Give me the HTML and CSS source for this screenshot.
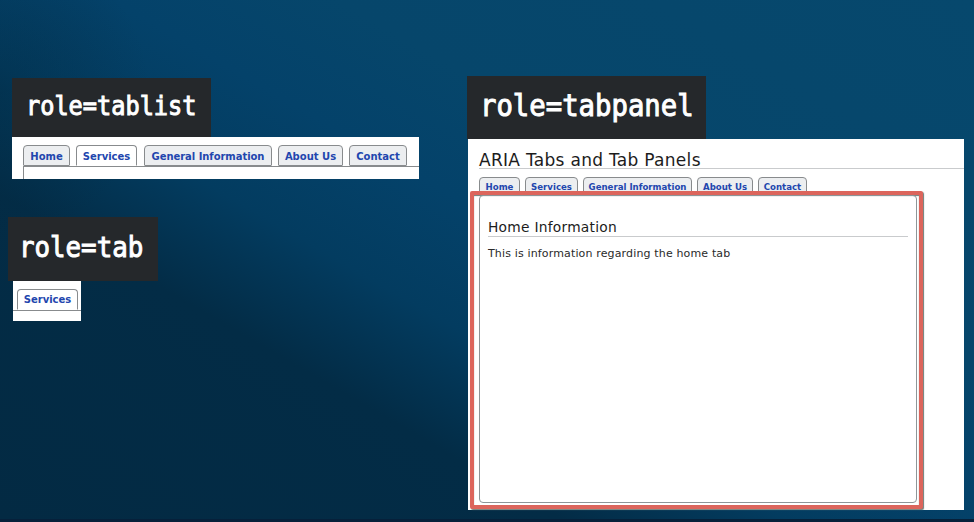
FILE: index.html
```html
<!DOCTYPE html>
<html lang="en">
<head>
<meta charset="utf-8">
<title>ARIA Tabs and Tab Panels</title>
<link rel="stylesheet" href="styles.css">
</head>
<body>
<main class="slide">
  <div class="col-left">
    <section class="example">
      <div class="label label-list"><code>role=tablist</code></div>
      <div class="strip">
        <nav class="tabs">
          <span class="tab w-home">Home</span><span class="tab w-services active">Services</span><span class="tab w-general">General Information</span><span class="tab w-about">About Us</span><span class="tab w-contact">Contact</span>
        </nav>
        <div class="edge"></div>
      </div>
    </section>
    <section class="example single">
      <div class="label label-tab"><code>role=tab</code></div>
      <div class="chip">
        <span class="tab w-services active">Services</span>
        <div class="chip-edge"></div>
      </div>
    </section>
  </div>
  <section class="col-right">
    <div class="label label-panel"><code>role=tabpanel</code></div>
    <div class="page">
      <h1><span>ARIA Tabs and Tab Panels</span></h1>
      <nav class="tabs small">
        <span class="tab w-home">Home</span><span class="tab w-services">Services</span><span class="tab w-general">General Information</span><span class="tab w-about">About Us</span><span class="tab w-contact">Contact</span>
      </nav>
      <div class="highlight">
        <div class="panel">
          <h2>Home Information</h2>
          <p>This is information regarding the home tab</p>
        </div>
      </div>
    </div>
  </section>
</main>
</body>
</html>
```
FILE: styles.css
```css
* { box-sizing: border-box; }
body { margin: 0; }
.slide {
  width: 974px;
  height: 522px;
  overflow: hidden;
  display: grid;
  grid-template-columns: 468px 496px;
  border-bottom: 3px solid #06203a;
  background:
    radial-gradient(ellipse 150px 150px at 0 90px, rgba(2,40,62,.35) 0, rgba(2,40,62,0) 100%),
    linear-gradient(30deg, #032a43 0, #032c46 30%, #033c60 42%, #04426a 54%, #06466b 66%, #06486d 100%);
  font-family: "DejaVu Sans", Verdana, sans-serif;
}
.col-left { padding: 78px 0 0 12px; }
.label { background: #25282b; display: flex; align-items: center; }
.label code {
  font-family: "DejaVu Sans Mono", monospace;
  color: #fff;
  line-height: 1;
  white-space: pre;
  -webkit-text-stroke: .9px #fff;
}
.label-list { width: 199px; height: 59px; padding: 0 0 1px 14px; }
.label-list code { font-size: 23.6px; transform: scaleY(1.1); }
.label-tab { width: 150px; height: 64px; padding: 0 0 2px 11px; margin-left: -4px; }
.label-tab code { font-size: 25.8px; transform: scaleY(1.1); }
.label-panel { width: 239px; height: 63px; padding: 0 0 3px 13px; margin-left: -1px; }
.label-panel code { font-size: 27.3px; transform: scaleY(1.08); }
.strip { width: 407px; height: 42px; background: #fff; padding: 8px 0 0 11px; }
.tabs { display: flex; gap: 6px; }
.tab {
  height: 21px;
  flex: none;
  display: flex;
  align-items: center;
  justify-content: center;
  border: 1px solid #888b8d;
  border-radius: 4px 4px 1px 1px;
  background: #eceef0;
  color: #2246ae;
  font-size: 10px;
  font-weight: bold;
  white-space: nowrap;
  padding-top: 1px;
}
.active { background: #fff; border-bottom-color: #fff; }
.w-home { width: 47px; }
.w-services { width: 61px; }
.w-general { width: 128px; }
.w-about { width: 65px; }
.w-contact { width: 58px; }
.strip .w-general { margin-left: 1px; letter-spacing: -.05px; }
.edge { height: 13px; border-top: 1px solid #888b8d; border-left: 1px solid #888b8d; }
.single { margin-top: 38px; }
.chip { width: 68px; height: 40px; margin-left: 1px; background: #fff; padding-top: 8px; }
.chip .tab { margin-left: 4px; height: 21px; padding-top: 0; }
.chip-edge { border-top: 1px solid #888b8d; }
.col-right { padding-top: 76px; }
.page { height: 371px; background: #fff; }
h1 {
  margin: 0 0 0 11px;
  height: 30px;
  padding-top: 12px;
  border-bottom: 1px solid #c9cbcd;
  color: #1c1c1c;
  font-size: 17px;
  letter-spacing: .29px;
  line-height: 19px;
  font-weight: normal;
}
.small { margin: 8px 0 0 11px; gap: 5px; }
.small .tab { height: 19px; font-size: 8.6px; padding-top: 0; }
.small .w-home { width: 41px; }
.small .w-services { width: 53px; }
.small .w-general { width: 109px; }
.small .w-about { width: 56px; }
.small .w-contact { width: 49px; }
.highlight {
  position: relative;
  margin: -5px 0 0 2px;
  width: 453px;
  height: 318px;
  border: 4px solid #dc655c;
  box-shadow: 1px 1px 1px #6d7d78, inset 0 1px 1px #6d7d78;
  border-radius: 2px;
  background: #fff;
  padding: 0 2px 2px 5px;
}
.panel {
  height: 308px;
  border: 1px solid #8d9598;
  border-radius: 4px;
  padding: 22px 8px 0 8px;
}
h2 {
  margin: 0;
  height: 19px;
  border-bottom: 1px solid #c9cbcd;
  color: #1c1c1c;
  font-size: 13.8px;
  letter-spacing: .25px;
  line-height: 19px;
  font-weight: normal;
}
p { margin: 9px 0 0; color: #2a2a2a; font-size: 11px; letter-spacing: .15px; line-height: 16px; }
```
